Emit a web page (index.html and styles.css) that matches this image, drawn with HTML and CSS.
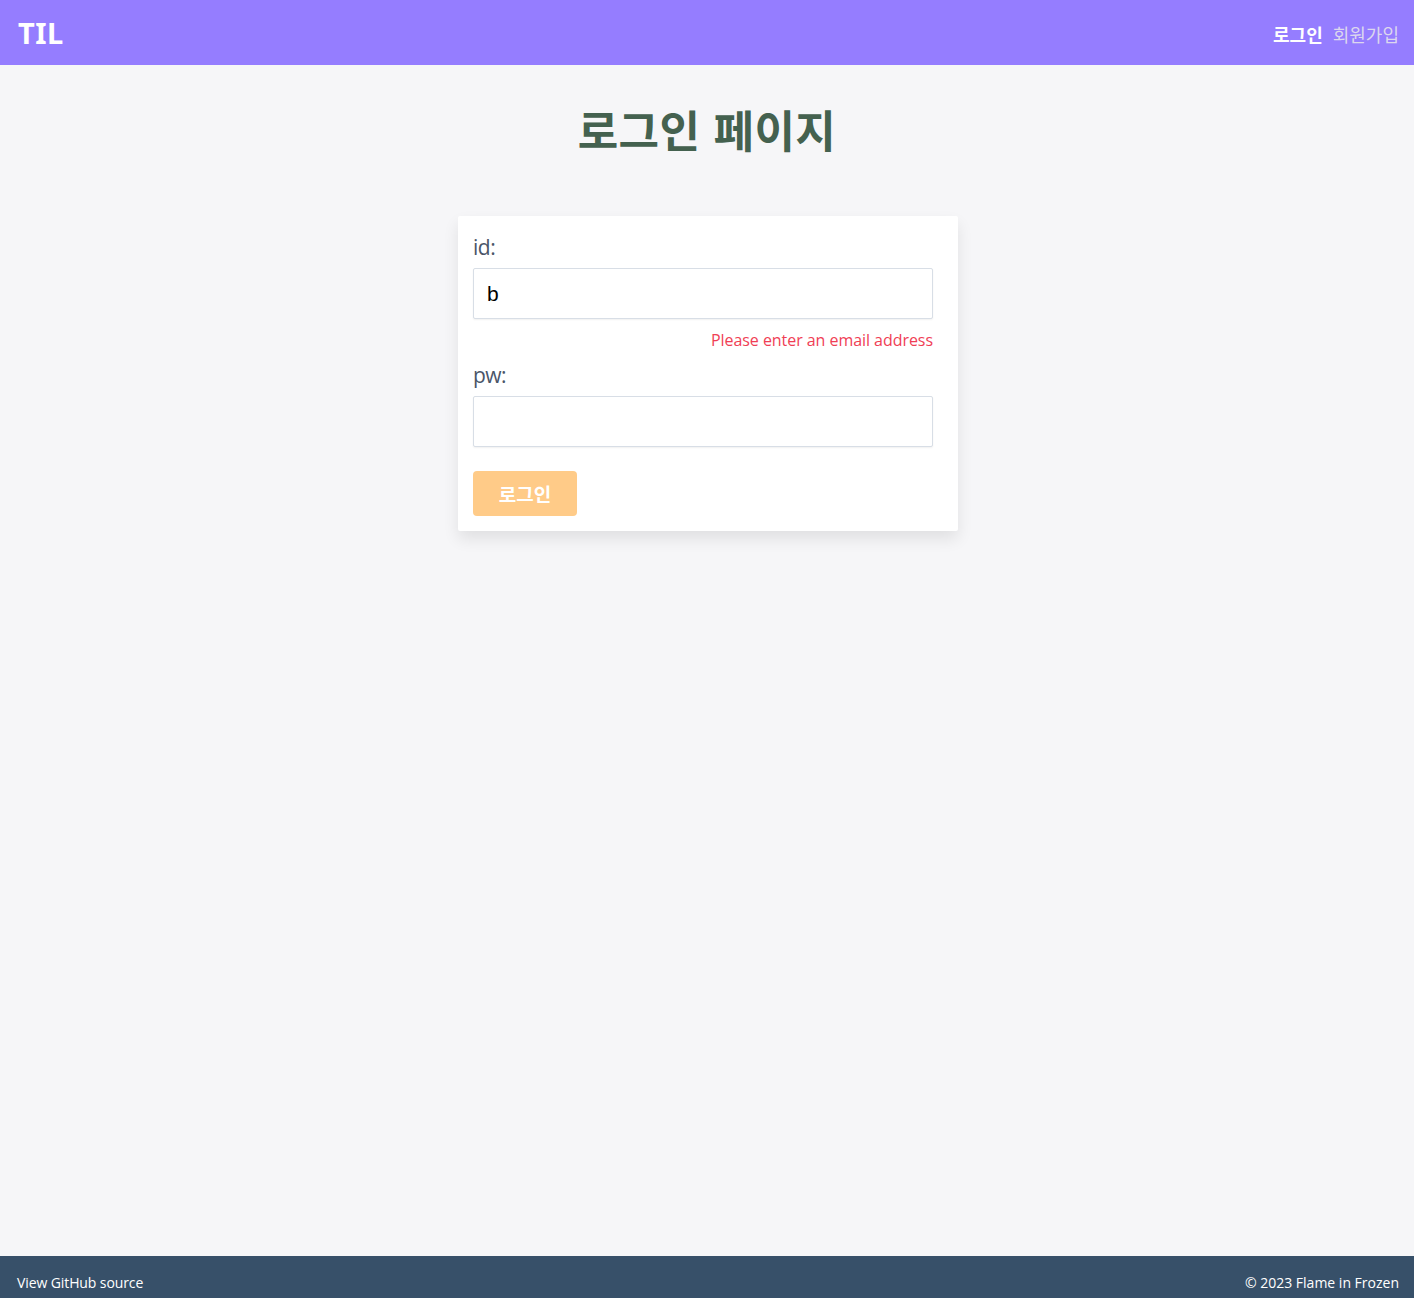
FILE: index.html
```html
<!DOCTYPE html>
<html lang="ko">
<head>
<meta charset="utf-8">
<title>TIL</title>
<link rel="stylesheet" href="styles.css">
</head>
<body>
<header class="topbar">
  <a class="logo" href="#">TIL</a>
  <nav class="nav">
    <a class="nav-link active" href="#">로그인</a>
    <a class="nav-link" href="#">회원가입</a>
  </nav>
</header>
<main class="main">
  <h1 class="title">로그인 페이지</h1>
  <form class="card">
    <label class="label" for="id">id:</label>
    <input class="input" id="id" type="text" value="b">
    <p class="error">Please enter an email address</p>
    <label class="label" for="pw">pw:</label>
    <input class="input" id="pw" type="password">
    <button class="btn" type="button" disabled>로그인</button>
  </form>
</main>
<footer class="footer">
  <a class="foot-link" href="#">View GitHub source</a>
  <span class="copy">© 2023 Flame in Frozen</span>
</footer>
</body>
</html>
```
FILE: styles.css
```css
* { box-sizing: border-box; }
html, body { margin: 0; padding: 0; }
body {
  min-height: 100vh;
  display: flex;
  flex-direction: column;
  background: #f6f6f8;
  font-family: "Noto Sans", "Noto Sans CJK KR", sans-serif;
}
.topbar {
  height: 65px;
  background: #957dff;
  display: flex;
  align-items: center;
  justify-content: space-between;
  padding: 0 15px 0 18px;
}
.logo {
  color: #fff;
  font-family: "Noto Sans", "Noto Sans CJK KR", sans-serif;
  font-weight: 700;
  font-size: 29px;
  text-decoration: none;
  letter-spacing: 0.5px;
}
.nav { display: flex; gap: 10px; padding-top: 2px; }
.nav-link {
  color: #dcd7ee;
  font-family: "Noto Sans CJK KR", sans-serif;
  font-size: 18px;
  text-decoration: none;
}
.nav-link.active { color: #fff; font-weight: 700; }
.main {
  flex: 1;
  display: flex;
  flex-direction: column;
  align-items: center;
}
.title {
  margin: 35px 0 58px;
  font-family: "Noto Sans CJK KR", sans-serif;
  font-size: 44px;
  font-weight: 700;
  color: #44614f;
  line-height: 58px;
  letter-spacing: 0.5px;
}
.card {
  width: 500px;
  margin-left: 2px;
  background: #fff;
  padding: 18px 25px 15px 15px;
  display: flex;
  flex-direction: column;
  box-shadow: 0 8px 16px rgba(0,0,0,0.09);
  border-radius: 2px;
}
.label {
  font-size: 21px;
  color: #4a5568;
  line-height: 26px;
  margin-bottom: 8px;
  font-family: "Open Sans", sans-serif;
  font-weight: 400;
  letter-spacing: -0.5px;
}
.input {
  width: 460px;
  height: 51px;
  border: 1px solid #d8dee6;
  box-shadow: 0 1px 2px rgba(0,0,0,0.06);
  border-radius: 2px;
  padding: 0 13px;
  font-family: "Liberation Sans", Arial, sans-serif;
  font-size: 21px;
  color: #000;
  outline: none;
}
.error {
  width: 460px;
  margin: 10px 0 11px;
  text-align: right;
  color: #f03e55;
  font-size: 16px;
  line-height: 22px;
  font-family: "Open Sans", sans-serif;
  letter-spacing: -0.05px;
}
.btn {
  margin-top: 24px;
  width: 104px;
  height: 45px;
  border: none;
  border-radius: 4px;
  background: #ffcb88;
  color: #fff;
  font-family: "Noto Sans CJK KR", sans-serif;
  font-weight: 700;
  font-size: 19px;
  cursor: default;
}
.footer {
  height: 42px;
  background: #375069;
  display: flex;
  justify-content: space-between;
  align-items: flex-end;
  padding: 0 15px 6px 17px;
  color: #fff;
  font-size: 14px;
  font-family: "Open Sans", sans-serif;
}
.foot-link { color: #fff; text-decoration: none; letter-spacing: -0.1px; }
.copy { letter-spacing: 0; }
```
